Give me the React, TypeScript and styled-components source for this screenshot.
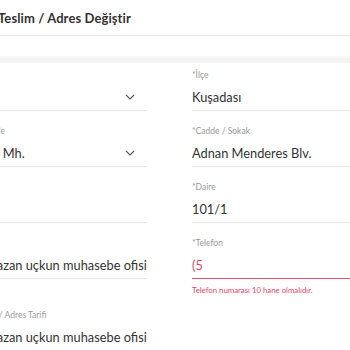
import React from "react";
import styled, { createGlobalStyle } from "styled-components";

const Global = createGlobalStyle`
  html, body { margin: 0; padding: 0; background: #ffffff; overflow: hidden; }
  body { font-family: Lato, "Open Sans", sans-serif; color: #333333; }
`;

const Page = styled.div`
  width: 420px;
  margin-left: -28px;
  display: flex;
  flex-direction: column;
`;

const Header = styled.div`
  height: 35px;
  padding-left: 26px;
  display: flex;
  align-items: center;
  border-bottom: 1px solid #e8e8e8;
`;

const Title = styled.h2`
  margin: 0;
  font-size: 13px;
  font-weight: 700;
  color: #333333;
  letter-spacing: 0.1px;
`;

const Gap = styled.div`
  height: 20px;
`;

const Band = styled.div`
  height: 7px;
  background: linear-gradient(#fbfbfb, #f1f1f1 60%, #f7f7f7);
`;

const Form = styled.div`
  display: grid;
  grid-template-columns: 174px 174px;
  column-gap: 46px;
  row-gap: 14px;
  padding-top: 6px;
  align-items: start;
`;

const Field = styled.div`
  display: flex;
  flex-direction: column;
`;

const Label = styled.div`
  font-size: 8.5px;
  line-height: 12px;
  height: 12px;
  color: #9a9a9a;
  white-space: nowrap;
`;

const Control = styled.div<{ $error?: boolean }>`
  margin-top: 6px;
  height: 20px;
  padding-bottom: 3px;
  display: flex;
  align-items: center;
  justify-content: space-between;
  border-bottom: 1px solid ${(p) => (p.$error ? "#dc5570" : "#e6e6e6")};
`;

const Value = styled.span<{ $error?: boolean }>`
  font-size: 12.8px;
  line-height: 20px;
  color: ${(p) => (p.$error ? "#d9486a" : "#333333")};
  white-space: nowrap;
`;

const Chevron = styled.svg`
  width: 10px;
  height: 6px;
  margin-left: auto;
  margin-right: 11px;
  flex: none;
`;

const ErrorText = styled.div`
  margin-top: 7px;
  font-size: 7.8px;
  line-height: 9px;
  color: #e0476b;
  white-space: nowrap;
`;

const Footer = styled.div`
  height: 10px;
  background: #f3f3f3;
`;

const Arrow = () => (
  <Chevron viewBox="0 0 10 6">
    <polyline points="1,1 5,5 9,1" fill="none" stroke="#555" strokeWidth="1.1" />
  </Chevron>
);

type FieldProps = {
  label: string;
  value: string;
  select?: boolean;
  error?: string;
};

const FormField = ({ label, value, select, error }: FieldProps) => (
  <Field>
    <Label>{label}</Label>
    <Control $error={!!error}>
      <Value $error={!!error}>{value}</Value>
      {select && <Arrow />}
    </Control>
    {error && <ErrorText>{error}</ErrorText>}
  </Field>
);

export default function App() {
  return (
    <>
      <Global />
      <Page>
        <Header>
          <Title>Teslim / Adres Değiştir</Title>
        </Header>
        <Gap />
        <Band />
        <Form>
          <FormField label="*İl" value="" select />
          <FormField label="*İlçe" value="Kuşadası" />
          <FormField label="*Mahalle" value="Dere Mh." select />
          <FormField label="*Cadde / Sokak" value="Adnan Menderes Blv." />
          <FormField label="*Bina" value="" />
          <FormField label="*Daire" value="101/1" />
          <FormField label="*Ad" value="Ramazan uçkun muhasebe ofisi" />
          <FormField label="*Telefon" value="(5" error="Telefon numarası 10 hane olmalıdır." />
          <FormField label="*Adres / Adres Tarifi" value="Ramazan uçkun muhasebe ofisi" />
        </Form>
        <Footer />
      </Page>
    </>
  );
}
